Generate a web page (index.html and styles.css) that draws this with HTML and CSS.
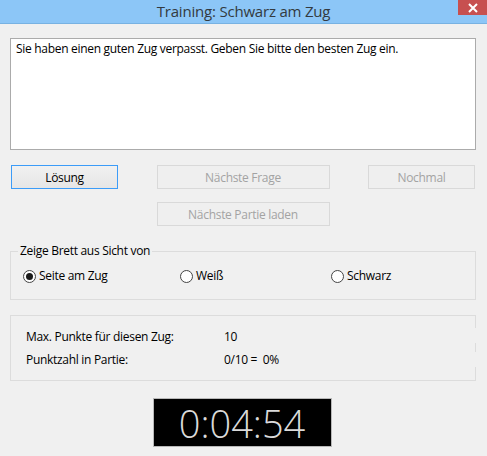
FILE: index.html
```html
<!DOCTYPE html>
<html lang="de">
<head>
<meta charset="utf-8">
<title>Training: Schwarz am Zug</title>
<link rel="stylesheet" href="styles.css">
</head>
<body>
<div class="window">
  <div class="titlebar">
    <span class="title">Training: Schwarz am Zug</span>
    <span class="close">
      <svg width="12" height="10" viewBox="0 0 12 10"><path d="M2 1 L10 9 M10 1 L2 9" stroke="#fff" stroke-width="2"/></svg>
    </span>
  </div>
  <div class="content">
    <div class="textbox">Sie haben einen guten Zug verpasst. Geben Sie bitte den besten Zug ein.</div>
    <div class="btnrow">
      <div class="btn default">Lösung</div>
      <div class="btn disabled">Nächste Frage</div>
      <div class="btn disabled">Nochmal</div>
      <div class="spacer"></div>
      <div class="btn disabled">Nächste Partie laden</div>
    </div>
    <fieldset class="group">
      <legend>Zeige Brett aus Sicht von</legend>
      <div class="radios">
        <label class="radio"><span class="dot checked"></span>Seite am Zug</label>
        <label class="radio"><span class="dot"></span>Weiß</label>
        <label class="radio"><span class="dot"></span>Schwarz</label>
      </div>
    </fieldset>
    <div class="scorebox">
      <div class="row"><span class="lbl">Max. Punkte für diesen Zug:</span><span>10</span></div>
      <div class="row"><span class="lbl">Punktzahl in Partie:</span><span>0/10 =&nbsp; 0%</span></div>
    </div>
    <div class="timerwrap">
      <div class="timer">0:04:54</div>
    </div>
  </div>
</div>
</body>
</html>
```
FILE: styles.css
```css
html, body {
  margin: 0;
  padding: 0;
  background: #f0f0f0;
}
body {
  font-family: "Open Sans", "Noto Sans", sans-serif;
  font-size: 12px;
  letter-spacing: -0.3px;
  color: #000;
}
.window {
  width: 487px;
  height: 456px;
  overflow: hidden;
}
.titlebar {
  height: 23px;
  background: #8cc6f7;
  border-bottom: 1px solid #78b2e2;
  display: flex;
  justify-content: center;
  align-items: center;
  position: relative;
}
.title {
  font-size: 15px;
  letter-spacing: -0.2px;
  color: #333a40;
  line-height: 23px;
}
.close {
  position: absolute;
  right: 0;
  top: 0;
  width: 29px;
  height: 15px;
  background: #c75050;
  display: flex;
  align-items: center;
  justify-content: center;
}
.content {
  padding: 0 11px 0 10px;
}
.textbox {
  margin-top: 14px;
  background: #fff;
  border: 1px solid #ababab;
  padding: 2px 5px;
  box-sizing: border-box;
  height: 112px;
  line-height: 16px;
}
.btnrow {
  margin-top: 15px;
  padding: 0 1px;
  display: grid;
  grid-template-columns: 107px 173px 107px;
  justify-content: space-between;
  row-gap: 13px;
}
.btn {
  height: 24px;
  box-sizing: border-box;
  display: flex;
  align-items: center;
  justify-content: center;
  border: 1px solid #d9d9d9;
  background: #efefef;
}
.btn.default {
  border-color: #3c9cf8;
  background: linear-gradient(#f1f1f1, #e6e6e6);
  color: #000;
}
.btn.disabled {
  color: #a3a3a3;
}
.group {
  margin: 17px 0 0 0;
  padding: 0 0 0 12px;
  border: 1px solid #dcdcdc;
  height: 57px;
  box-sizing: border-box;
}
.group legend {
  padding: 0 2px;
  margin-left: -5px;
  line-height: 16px;
}
.radios {
  display: grid;
  grid-template-columns: 157px 151px auto;
  margin-top: 9px;
}
.radio {
  display: flex;
  align-items: center;
  gap: 3px;
  line-height: 16px;
}
.dot {
  width: 11px;
  height: 11px;
  border: 1px solid #444;
  border-radius: 50%;
  background: #fff;
  display: flex;
  align-items: center;
  justify-content: center;
}
.dot.checked::after {
  content: "";
  width: 7px;
  height: 7px;
  border-radius: 50%;
  background: #1a1a1a;
}
.scorebox {
  margin-top: 15px;
  height: 66px;
  box-sizing: border-box;
  border: 1px solid #dcdcdc;
  border-right: none;
  background: linear-gradient(to bottom, #dcdcdc 0 12px, transparent 12px 27px, #dcdcdc 27px 36px, transparent 36px 51px, #dcdcdc 51px) right top / 1px 100% no-repeat;
  padding: 13px 0 0 15px;
}
.row {
  display: flex;
  height: 23px;
  line-height: 16px;
}
.lbl {
  width: 198px;
}
.timerwrap {
  display: flex;
  justify-content: center;
  margin-top: 17px;
}
.timer {
  width: 179px;
  height: 49px;
  box-sizing: border-box;
  border: 1px solid #b8b8b8;
  background: #000;
  color: #dadada;
  font-family: "Open Sans", sans-serif;
  font-weight: 300;
  font-size: 38px;
  letter-spacing: 0;
  display: flex;
  align-items: center;
  justify-content: center;
  margin-left: -2px;
}
```
